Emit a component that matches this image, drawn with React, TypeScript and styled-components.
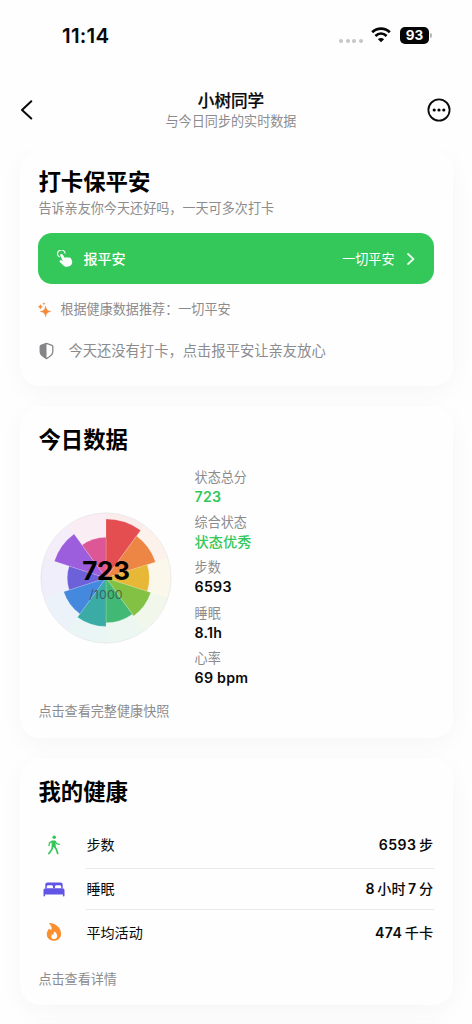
import React from 'react';
import styled, { createGlobalStyle } from 'styled-components';

const GREEN = '#34c759';
const GRAY = '#8c8c8e';

const GlobalStyle = createGlobalStyle`
  * { box-sizing: border-box; }
  html, body { margin: 0; padding: 0; background: #fefefe; }
  body {
    font-family: Inter, "Noto Sans CJK SC", sans-serif;
    color: #0a0a0a;
    overflow: hidden;
  }
  svg { display: block; flex: none; }
`;

const Screen = styled.main`
  width: 472px;
  height: 1024px;
  overflow: hidden;
  display: flex;
  flex-direction: column;
`;

const StatusBar = styled.div`
  height: 70px;
  flex: none;
  padding: 0 40px 0 62px;
  display: flex;
  align-items: center;
  justify-content: space-between;
`;

const Clock = styled.span`
  font-size: 20.5px;
  font-weight: 600;
  letter-spacing: 0.25px;
  line-height: 24px;
  padding-top: 1px;
`;

const StatusIcons = styled.div`
  display: flex;
  align-items: center;
`;

const SignalDots = styled.div`
  display: flex;
  gap: 2.6px;
  margin: 11px 8px 0 0;
`;

const SignalDot = styled.i`
  width: 4px;
  height: 4px;
  border-radius: 50%;
  background: #c6c6c6;
`;

const Battery = styled.div`
  width: 29px;
  height: 17px;
  margin-left: 9px;
  border-radius: 5px;
  background: #050505;
  color: #fff;
  font-size: 13.5px;
  font-weight: 700;
  line-height: 17px;
  text-align: center;
`;

const BatteryTip = styled.i`
  width: 2px;
  height: 5px;
  margin-left: 1px;
  border-radius: 0 2px 2px 0;
  background: #b5b5b5;
`;

const Header = styled.header`
  height: 80px;
  flex: none;
  padding: 0 20px;
  display: grid;
  grid-template-columns: 25px 1fr 25px;
  align-items: center;
  background: #fefefe;
  z-index: 1;

  & > svg:last-child { justify-self: end; }
`;

const HeaderText = styled.div`
  text-align: center;
  padding-right: 10px;
`;

const HeaderTitle = styled.h1`
  margin: 0;
  font-size: 16.6px;
  font-weight: 500;
  line-height: 22px;
  -webkit-text-stroke: 0.2px currentColor;
`;

const Caption = styled.p<{ $top?: number }>`
  margin: ${({ $top = 0 }) => $top}px 0 0;
  color: ${GRAY};
  font-size: 13.1px;
  line-height: 18px;
`;

const Cards = styled.div`
  padding: 0 19px 0 20px;
  display: flex;
  flex-direction: column;
  gap: 20px;
`;

const Card = styled.section<{ $height: number }>`
  height: ${({ $height }) => $height}px;
  flex: none;
  padding: 20px 19px 0 18.4px;
  border-radius: 20px;
  background: #fefefe;
  box-shadow: 0 6px 24px rgba(0, 0, 0, 0.036);
`;

const CardTitle = styled.h2<{ $pull?: number }>`
  margin: ${({ $pull = 0 }) => -$pull}px 0 0;
  font-size: 22.4px;
  font-weight: 700;
  line-height: 28px;
  color: #000;
`;

const CheckInButton = styled.button`
  width: 100%;
  height: 51px;
  margin: 16px 0 0;
  padding: 0 19.5px 0 19px;
  border: 0;
  border-radius: 14px;
  background: ${GREEN};
  color: #fff;
  font: inherit;
  font-size: 14.1px;
  font-weight: 500;
  display: flex;
  align-items: center;
`;

const ButtonLabel = styled.span`
  margin: -2px 0 0 9px;
  flex: 1;
  text-align: left;
`;

const ButtonValue = styled.span`
  margin: -1px 12px 0 0;
  font-size: 13.1px;
  font-weight: 400;
`;

const Hint = styled.div<{ $top: number; $gap: number; $size: number }>`
  margin-top: ${({ $top }) => $top}px;
  height: 20px;
  display: flex;
  align-items: center;
  gap: ${({ $gap }) => $gap}px;
  color: ${GRAY};
  font-size: ${({ $size }) => $size}px;
  line-height: 20px;
`;

const Today = styled.div`
  margin-top: 14px;
  display: flex;
  align-items: center;
  gap: 22.6px;
`;

const Rose = styled.div`
  position: relative;
  margin: 2px 0 0 1.6px;
  width: 132px;
  height: 132px;
`;

const Score = styled.div`
  position: absolute;
  inset: 0;
  display: flex;
  flex-direction: column;
  align-items: center;
`;

const ScoreValue = styled.strong`
  margin-top: 44px;
  font-size: 26px;
  font-weight: 700;
  line-height: 30px;
  letter-spacing: -0.2px;
  color: #000;
`;

const ScoreMax = styled.span`
  margin-top: 1px;
  font-size: 12.3px;
  line-height: 16px;
  letter-spacing: 0.2px;
  color: rgba(50, 50, 55, 0.62);
`;

const Metrics = styled.dl`
  margin: 0;
  display: flex;
  flex-direction: column;
  gap: 7.2px;
`;

const MetricLabel = styled.dt`
  font-size: 13.1px;
  line-height: 19px;
  color: ${GRAY};
`;

const MetricValue = styled.dd<{ $accent?: boolean }>`
  margin: 0;
  font-size: 14.2px;
  font-weight: 600;
  line-height: 19px;
  letter-spacing: 0.25px;
  color: ${({ $accent }) => ($accent ? GREEN : '#0a0a0a')};
`;

const CjkValue = styled.span`
  font-weight: 500;
  letter-spacing: 0;
`;

const HealthList = styled.div`
  margin-top: 16px;
`;

const HealthRow = styled.div<{ $height: number }>`
  height: ${({ $height }) => $height}px;
  display: flex;
  align-items: center;
`;

const IconSlot = styled.div`
  width: 32px;
  margin-right: 16px;
  display: flex;
  justify-content: center;
`;

const RowBody = styled.div<{ $line?: boolean }>`
  flex: 1;
  height: 100%;
  padding-bottom: 1px;
  display: flex;
  align-items: center;
  justify-content: space-between;
  border-bottom: ${({ $line }) => ($line ? '1px solid #e9e9ea' : '0')};
  font-size: 14.1px;
`;

const RowValue = styled.span`
  padding-right: 1px;
  font-weight: 600;
  letter-spacing: 0.45px;
  word-spacing: -1.6px;
`;

const WifiIcon = () => (
  <svg width="20" height="16" viewBox="0 0 20 16" fill="none" stroke="#050505">
    <path d="M1.2 5.2C6.2.4 13.8.4 18.8 5.2" strokeWidth="2.7" />
    <path d="M4.4 8.9c3.3-3 7.9-3 11.2 0" strokeWidth="2.7" />
    <path d="M10 15.2 6.9 12.2c1.8-1.5 4.4-1.5 6.2 0z" fill="#050505" stroke="none" />
  </svg>
);

const BackIcon = () => (
  <svg width="14" height="22" viewBox="0 0 14 22" fill="none" stroke="#0a0a0a" strokeWidth="2" strokeLinecap="round" strokeLinejoin="round">
    <path d="M11.3 2.2 2 11 11.3 19.5" />
  </svg>
);

const MoreIcon = () => (
  <svg width="25" height="24" viewBox="0 0 25 24">
    <circle cx="12" cy="12" r="10.6" fill="none" stroke="#0a0a0a" strokeWidth="1.8" />
    <circle cx="7.2" cy="12" r="1.6" />
    <circle cx="12" cy="12" r="1.6" />
    <circle cx="16.8" cy="12" r="1.6" />
  </svg>
);

const TapIcon = () => (
  <svg width="17" height="18" viewBox="0 0 17 18">
    <path d="M2.3 6.9A3.8 3.8 0 1 1 8.1 3.3" fill="none" stroke="#fff" strokeWidth="1.1" strokeLinecap="round" />
    <path
      d="M3.9 4.1c.8-.5 1.5-.1 1.9.6l2 3.2c.7-.7 1.5-.7 2-.1.7-.7 1.5-.6 2 .1.7-.5 1.6-.3 2 .4l.8 1.4c1.3 2.4.5 5-1.7 6.3-2.5 1.4-5.2.9-7-1.1L2.9 12c-.5-.6-.4-1.2.1-1.5.5-.4 1.3-.3 2.1.2l.8.5L3.4 5.9c-.4-.7-.2-1.4.5-1.8z"
      fill="#fff"
    />
  </svg>
);

const ForwardIcon = () => (
  <svg width="8" height="14" viewBox="0 0 8 14" fill="none" stroke="#fff" strokeOpacity=".88" strokeWidth="1.9" strokeLinecap="round" strokeLinejoin="round">
    <path d="M1.1 2 6.4 7 1.1 12" />
  </svg>
);

const SparkIcon = () => (
  <svg width="13" height="15" viewBox="0 0 13 15" fill="#f5893a">
    <path d="M7.6 4.3Q8.1 9 12.6 9.5 8.1 10 7.6 14.7 7.1 10 2.4 9.5 7.1 9 7.6 4.3z" stroke="#f5893a" strokeWidth=".6" />
    <path d="M2.4 2.6q.25 2 2.1 2.2-1.85.2-2.1 2.2Q2.150 5 .3 4.800 2.150 4.600 2.400 2.600z" stroke="#f5893a" strokeWidth=".5" />
    <path d="M5.900.3q.15 1.400 1.500 1.500-1.350.1-1.500 1.500-.15-1.400-1.500-1.500Q5.750 1.700 5.900.3z" />
  </svg>
);

const ShieldIcon = () => (
  <svg width="16" height="18" viewBox="0 0 16 18">
    <path d="M8.5 1.4 14 3.4q.8.3.8 1.1v5.1c0 3.200-2.400 5-6.300 7-3.900-2-6.300-3.800-6.300-7V4.500q0-.8.8-1.100z" fill="none" stroke="#858587" strokeWidth="1.3" strokeLinejoin="round" />
    <path d="M8.5 1.4 3 3.4q-.8.3-.8 1.100v5.100c0 3.200 2.400 5 6.300 7z" fill="#858587" />
  </svg>
);

const WalkIcon = () => (
  <svg width="14" height="20" viewBox="0 0 14 20" fill="none" stroke={GREEN} strokeLinecap="round" strokeLinejoin="round">
    <circle cx="7.2" cy="2.2" r="1.8" fill={GREEN} stroke="none" />
    <path d="M5.3 6.3h2.400l.3 5.200H5.500z" fill={GREEN} strokeWidth="1.6" />
    <path d="M4.800 6.400 2.500 7.900 2 10.700M8.300 6.400 9.600 8.700 12.300 9.400" strokeWidth="1.3" />
    <path d="M5.500 11.800 4.700 14.800 1.900 18.500M7.400 11.500 9.300 14.200 10.700 18.500" strokeWidth="1.7" />
  </svg>
);

const BedIcon = () => (
  <svg width="22" height="15" viewBox="0 0 22 15" fill="#6155e6">
    <path d="M2.3 6.2V2.7C2.3 1.3 3.2.4 4.6.4h12.8c1.4 0 2.3.9 2.3 2.3v3.500h-1.500V4.800c0-1-.6-1.500-1.500-1.500h-3.200c-.9 0-1.500.5-1.500 1.500v1.400h-2V4.800c0-1-.6-1.500-1.500-1.500H5.300c-.9 0-1.500.5-1.500 1.500v1.400z" />
    <path d="M2.700 6.200h16.600c1.400 0 2.200.8 2.200 2.200v5.100c0 .6-.3.9-.8.9s-.8-.3-.8-.9v-1.100H2.100v1.100c0 .6-.3.9-.8.9s-.8-.3-.8-.9V8.400C.5 7 1.300 6.200 2.700 6.200z" />
  </svg>
);

const FlameIcon = () => (
  <svg width="16" height="20" viewBox="0 0 16 20">
    <path d="M3.6.9C8.8.9 15.1 5 15.1 11.8c0 4.300-3 7-7.100 7-4.100 0-7.200-2.600-7.200-6.500 0-2.500 1.200-4.200 1.900-5.100.3-.4.7-.4 1-.1.5.6 1 .9 1.500.9C6.600 5.700 4.700 3 3.300 1.800c-.4-.4-.3-.9.3-.9z" fill="#fb8f2e" />
    <path d="M8.300 9.500c2 1.300 2.900 2.800 2.900 4.600 0 1.800-1.200 2.900-3 2.900s-3-1-3-2.600c0-1 .4-1.700.8-2.200.5.500.9.6 1.400.5.400-1 .4-1.900.4-2.700 0-.4.2-.6.500-.5z" fill="#fff" />
  </svg>
);

const sectors: { color: string; r: number }[] = [
  { color: '#e0363a', r: 59 },
  { color: '#ea752c', r: 52 },
  { color: '#e3ad1c', r: 43.3 },
  { color: '#72b92c', r: 47 },
  { color: '#27af60', r: 44.7 },
  { color: '#20a09a', r: 48.5 },
  { color: '#2b79d8', r: 44.4 },
  { color: '#5a4cd4', r: 38.7 },
  { color: '#9048d8', r: 54.3 },
  { color: '#d83f88', r: 40.7 },
];

const wedge = (index: number, r: number) => {
  const point = (deg: number) => {
    const a = ((deg - 90) * Math.PI) / 180;
    return `${(66 + r * Math.cos(a)).toFixed(2)} ${(66 + r * Math.sin(a)).toFixed(2)}`;
  };
  return `M66 66L${point(index * 36)}A${r} ${r} 0 0 1 ${point(index * 36 + 36)}Z`;
};

const RoseChart = () => (
  <svg width="132" height="132" viewBox="0 0 132 132">
    {sectors.map((s, i) => (
      <path key={i} d={wedge(i, 65)} fill={s.color} fillOpacity=".09" />
    ))}
    <circle cx="66" cy="66" r="65.2" fill="none" stroke="#b8bcc4" strokeOpacity=".3" strokeWidth=".8" />
    {sectors.map((s, i) => (
      <path key={i} d={wedge(i, s.r)} fill={s.color} fillOpacity=".87" stroke="#fff" strokeOpacity=".25" strokeWidth=".7" />
    ))}
  </svg>
);

const metrics = [
  { label: '状态总分', value: '723', accent: true },
  { label: '综合状态', value: <CjkValue>状态优秀</CjkValue>, accent: true },
  { label: '步数', value: '6593' },
  { label: '睡眠', value: '8.1h' },
  { label: '心率', value: '69 bpm' },
];

const healthRows = [
  { label: '步数', value: <>6593 <CjkValue>步</CjkValue></>, icon: <WalkIcon />, height: 46.5 },
  { label: '睡眠', value: <>8 <CjkValue>小时</CjkValue> 7 <CjkValue>分</CjkValue></>, icon: <BedIcon />, height: 41.5 },
  { label: '平均活动', value: <>474 <CjkValue>千卡</CjkValue></>, icon: <FlameIcon />, height: 44 },
];

export default function App() {
  return (
    <>
      <GlobalStyle />
      <Screen>
        <StatusBar>
          <Clock>11:14</Clock>
          <StatusIcons>
            <SignalDots>
              <SignalDot />
              <SignalDot />
              <SignalDot />
              <SignalDot />
            </SignalDots>
            <WifiIcon />
            <Battery>93</Battery>
            <BatteryTip />
          </StatusIcons>
        </StatusBar>
        <Header>
          <BackIcon />
          <HeaderText>
            <HeaderTitle>小树同学</HeaderTitle>
            <Caption>与今日同步的实时数据</Caption>
          </HeaderText>
          <MoreIcon />
        </Header>
        <Cards>
          <Card $height={236}>
            <CardTitle $pull={2}>打卡保平安</CardTitle>
            <Caption $top={3}>告诉亲友你今天还好吗，一天可多次打卡</Caption>
            <CheckInButton>
              <TapIcon />
              <ButtonLabel>报平安</ButtonLabel>
              <ButtonValue>一切平安</ButtonValue>
              <ForwardIcon />
            </CheckInButton>
            <Hint $top={15} $gap={9} $size={13.1}>
              <SparkIcon />
              <span>根据健康数据推荐：一切平安</span>
            </Hint>
            <Hint $top={22} $gap={14} $size={14.3}>
              <ShieldIcon />
              <span>今天还没有打卡，点击报平安让亲友放心</span>
            </Hint>
          </Card>
          <Card $height={332}>
            <CardTitle>今日数据</CardTitle>
            <Today>
              <Rose>
                <RoseChart />
                <Score>
                  <ScoreValue>723</ScoreValue>
                  <ScoreMax>/1000</ScoreMax>
                </Score>
              </Rose>
              <Metrics>
                {metrics.map((m) => (
                  <div key={m.label}>
                    <MetricLabel>{m.label}</MetricLabel>
                    <MetricValue $accent={m.accent}>{m.value}</MetricValue>
                  </div>
                ))}
              </Metrics>
            </Today>
            <Caption $top={15.5}>点击查看完整健康快照</Caption>
          </Card>
          <Card $height={247}>
            <CardTitle>我的健康</CardTitle>
            <HealthList>
              {healthRows.map((row, i) => (
                <HealthRow key={row.label} $height={row.height}>
                  <IconSlot>{row.icon}</IconSlot>
                  <RowBody $line={i < healthRows.length - 1}>
                    <span>{row.label}</span>
                    <RowValue>{row.value}</RowValue>
                  </RowBody>
                </HealthRow>
              ))}
            </HealthList>
            <Caption $top={16}>点击查看详情</Caption>
          </Card>
          <Card $height={200} />
        </Cards>
      </Screen>
    </>
  );
}
